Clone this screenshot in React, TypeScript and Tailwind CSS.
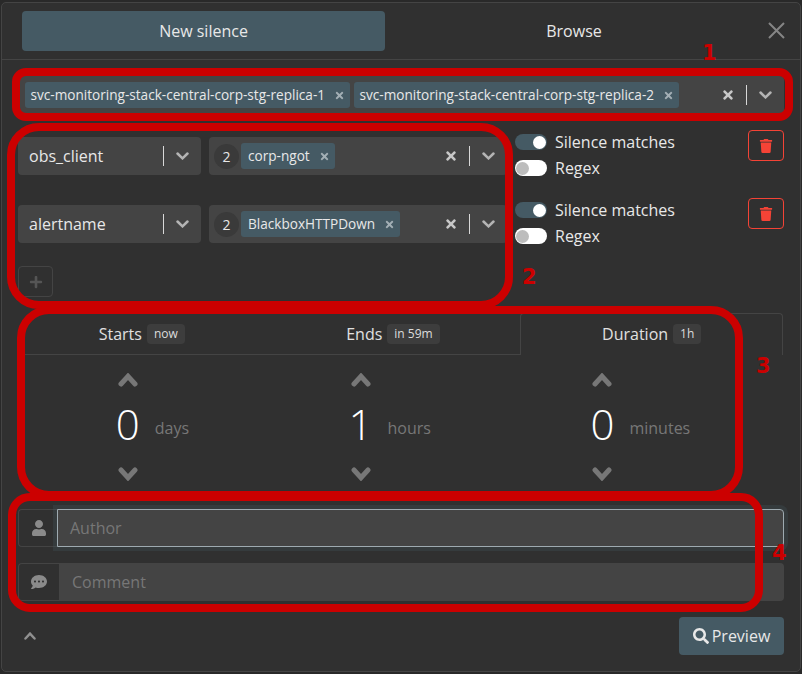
import { FaCommentDots, FaPlus, FaSearch, FaTimes, FaTrash, FaUser } from "react-icons/fa";

function Chevron({ w, h, sw, up, className }: { w: number; h: number; sw: number; up?: boolean; className: string }) {
  const inset = sw * 0.6;
  const pts = up
    ? `${inset},${h - inset} ${w / 2},${inset * 1.1} ${w - inset},${h - inset}`
    : `${inset},${inset} ${w / 2},${h - inset * 1.1} ${w - inset},${inset}`;
  return (
    <svg width={w} height={h} viewBox={`0 0 ${w} ${h}`} className={className} fill="none" stroke="currentColor" strokeWidth={sw} strokeLinecap="round" strokeLinejoin="miter">
      <polyline points={pts} />
    </svg>
  );
}

function Tag({ label, wide }: { label: string; wide?: boolean }) {
  return (
    <div className={wide ? "flex h-[26px] items-center rounded-[3px] bg-[#455a64] pl-[7px] text-[13.6px] text-[#e8e8e8]" : "flex h-[26px] items-center rounded-[3px] bg-[#455a64] pl-[5.5px] text-[13.6px] text-[#e8e8e8]"}>
      <span>{label}</span>
      <span className="flex w-[25px] justify-center pl-[4px]">
        <FaTimes size={11} className="text-[#a3afb5]" />
      </span>
    </div>
  );
}

function Indicators() {
  return (
    <div className="ml-auto flex items-center">
      <FaTimes size={14} className="text-[#c8c8c8]" />
      <span className="ml-[11px] mr-[12px] h-[20px] w-px bg-[#d8d8d8]" />
      <Chevron w={13} h={8} sw={2.5} className="mr-[12px] text-[#b4b4b4]" />
    </div>
  );
}

function Toggle({ on, label }: { on: boolean; label: string }) {
  return (
    <div className="flex h-[26px] items-center">
      <span
        className={
          on
            ? "flex h-[16px] w-[32px] items-center justify-end rounded-full bg-[#455a64] pr-[1px]"
            : "flex h-[16px] w-[32px] items-center justify-start rounded-full bg-white pl-[1px]"
        }
      >
        <span className={on ? "h-[13px] w-[13px] rounded-full bg-white" : "h-[13px] w-[13px] rounded-full bg-[#bdbdbd]"} />
      </span>
      <span className="ml-[8px] text-[16px] text-[#e8e8e8]">{label}</span>
    </div>
  );
}

function MatcherRow({ name, value }: { name: string; value: string }) {
  return (
    <div className="flex h-[68px] items-start">
      <div className="flex h-[38px] w-[183px] items-center rounded-[4px] bg-[#444444] pl-[11px] text-[16px] text-[#e8e8e8]">
        <span>{name}</span>
        <div className="ml-auto flex items-center">
          <span className="mr-[12px] h-[20px] w-px bg-[#d8d8d8]" />
          <Chevron w={13} h={8} sw={2.5} className="mr-[12px] text-[#b4b4b4]" />
        </div>
      </div>
      <div className="ml-[8px] flex h-[38px] w-[298px] items-center rounded-[4px] bg-[#444444] pl-[5px] text-[14px]">
        <span className="flex h-[25px] w-[25px] items-center justify-center rounded-full bg-[#3a3a3a] text-[#e8e8e8]">2</span>
        <span className="ml-[2px]">
          <Tag label={value} wide />
        </span>
        <Indicators />
      </div>
      <div className="ml-[8px] mt-[-8px] flex w-[180px] flex-col">
        <Toggle on label="Silence matches" />
        <Toggle on={false} label="Regex" />
      </div>
      <div className="ml-auto mt-[-7px] flex h-[31px] w-[36px] items-center justify-center rounded-[4px] border border-[#f44336]">
        <FaTrash size={14} className="text-[#f44336]" />
      </div>
    </div>
  );
}

function TabHead({ label, badge, active }: { label: string; badge: string; active?: boolean }) {
  return (
    <div
      className={
        active
          ? "mr-[1px] flex h-[42px] flex-auto items-center justify-center gap-[5px] rounded-t-[4px] border border-b-0 border-[#444444] px-[16px] pb-[1px] text-[16px] text-[#e0e0e0]"
          : "flex h-[42px] flex-auto items-center justify-center gap-[5px] border-b border-[#444444] px-[16px] text-[16px] text-[#e0e0e0]"
      }
    >
      <span>{label}</span>
      <span className="flex h-[20px] items-center rounded-[4px] bg-[#3d3d3d] px-[7px] text-[12px] text-[#dcdcdc]">{badge}</span>
    </div>
  );
}

function Spinner({ value, unit }: { value: string; unit: string }) {
  return (
    <div className="flex items-center pl-[21px]">
      <div className="flex w-[54px] flex-col items-center">
        <Chevron w={20} h={14} sw={5} up className="text-[#777777]" />
        <span className="mb-[3px] flex h-[77px] items-center pb-[5px] text-[42px] font-light text-white">{value}</span>
        <Chevron w={20} h={14} sw={5} className="text-[#777777]" />
      </div>
      <span className="mt-[1px] text-[16px] text-[#777777]">{unit}</span>
    </div>
  );
}

function Ring({ className }: { className: string }) {
  return <div className={`pointer-events-none absolute border-[8px] border-[#cc0000] ${className}`} />;
}

function Digit({ className, children }: { className: string; children: string }) {
  return (
    <span className={`absolute text-[21px] font-bold leading-none text-[#cc0000] ${className}`} style={{ fontFamily: "'DejaVu Sans', sans-serif" }}>
      {children}
    </span>
  );
}

export default function App() {
  return (
    <div className="relative h-[674px] w-[802px] overflow-hidden bg-[#292929] pl-[1px] pt-[2px]" style={{ fontFamily: "'Open Sans', sans-serif" }}>
      <div className="flex h-[670px] w-[800px] flex-col rounded-[5px] border border-[#444444] bg-[#303030]">
        {/* header */}
        <div className="flex h-[57px] shrink-0 items-center border-b border-[#444444] pb-[1px] pl-[20px]">
          <div className="flex h-[40px] w-[363px] items-center justify-center rounded-[4px] bg-[#455a64] text-[16px] text-[#e8e8e8]">New silence</div>
          <div className="ml-[8px] flex h-[40px] w-[362px] items-center justify-center text-[16px] text-[#e8e8e8]">Browse</div>
          <svg width="17" height="17" viewBox="0 0 17 17" className="ml-[13px] text-[#858585]" fill="none" stroke="currentColor" strokeWidth="2">
            <path d="M1 1 L16 16 M16 1 L1 16" />
          </svg>
        </div>

        <div className="flex flex-1 flex-col px-[16px] pt-[16px]">
          {/* instances */}
          <div className="flex h-[38px] shrink-0 items-center gap-[4px] rounded-[4px] bg-[#444444] pl-[7px]">
            <Tag label="svc-monitoring-stack-central-corp-stg-replica-1" />
            <Tag label="svc-monitoring-stack-central-corp-stg-replica-2" />
            <Indicators />
          </div>

          {/* matchers */}
          <div className="mt-[23px]">
            <MatcherRow name="obs_client" value="corp-ngot" />
            <MatcherRow name="alertname" value="BlackboxHTTPDown" />
            <div className="mt-[-7px] flex h-[31px] w-[35px] items-center justify-center rounded-[4px] border border-[#444444]">
              <FaPlus size={14} className="text-[#555555]" />
            </div>
          </div>

          {/* duration */}
          <div className="mt-[16px] flex">
            <TabHead label="Starts" badge="now" />
            <TabHead label="Ends" badge="in 59m" />
            <TabHead label="Duration" badge="1h" active />
          </div>
          <div className="mr-[32px] mt-[18px] flex justify-around">
            <Spinner value="0" unit="days" />
            <Spinner value="1" unit="hours" />
            <Spinner value="0" unit="minutes" />
          </div>

          {/* author */}
          <div className="mt-[28px] flex h-[38px] shrink-0">
            <div className="flex w-[40px] items-center justify-center rounded-l-[4px] border border-r-0 border-[#444444]">
              <FaUser size={16} className="text-[#8a8a8a]" />
            </div>
            <div className="ml-[-1px] flex flex-1 items-center rounded-r-[4px] border border-[#9eaab0] bg-[#444444] pl-[12px] text-[16px] text-[#777777] shadow-[0_0_0_4px_rgba(69,90,100,0.25)]">
              Author
            </div>
          </div>
          <div className="mt-[16px] flex h-[38px] shrink-0">
            <div className="flex w-[41px] items-center justify-center rounded-l-[4px] border border-r-0 border-[#444444]">
              <FaCommentDots size={16} className="text-[#8a8a8a]" />
            </div>
            <div className="flex flex-1 items-center rounded-r-[4px] bg-[#444444] pl-[13px] text-[16px] text-[#777777]">Comment</div>
          </div>

          {/* footer */}
          <div className="mt-[16px] flex h-[38px] shrink-0 items-center justify-between">
            <Chevron w={12} h={8} sw={2.4} up className="ml-[6px] text-[#909090]" />
            <div className="flex h-[38px] w-[105px] items-center justify-center gap-[3px] rounded-[4px] bg-[#455a64] text-[16px] text-[#e8e8e8]">
              <FaSearch size={16} />
              <span>Preview</span>
            </div>
          </div>
        </div>
      </div>

      {/* annotations drawn over the screenshot */}
      <Ring className="left-[12px] top-[68px] h-[53px] w-[781px] rounded-[14px]" />
      <Ring className="left-[7px] top-[123px] h-[186px] w-[506px] rounded-[32px]" />
      <Ring className="left-[17px] top-[306px] h-[193px] w-[726px] rounded-[32px]" />
      <Ring className="left-[8px] top-[493px] h-[119px] w-[755px] rounded-[22px]" />
      <Digit className="left-[702px] top-[43px]">1</Digit>
      <Digit className="left-[522px] top-[267px]">2</Digit>
      <Digit className="left-[756px] top-[356px]">3</Digit>
      <Digit className="left-[772px] top-[543px]">4</Digit>
    </div>
  );
}
